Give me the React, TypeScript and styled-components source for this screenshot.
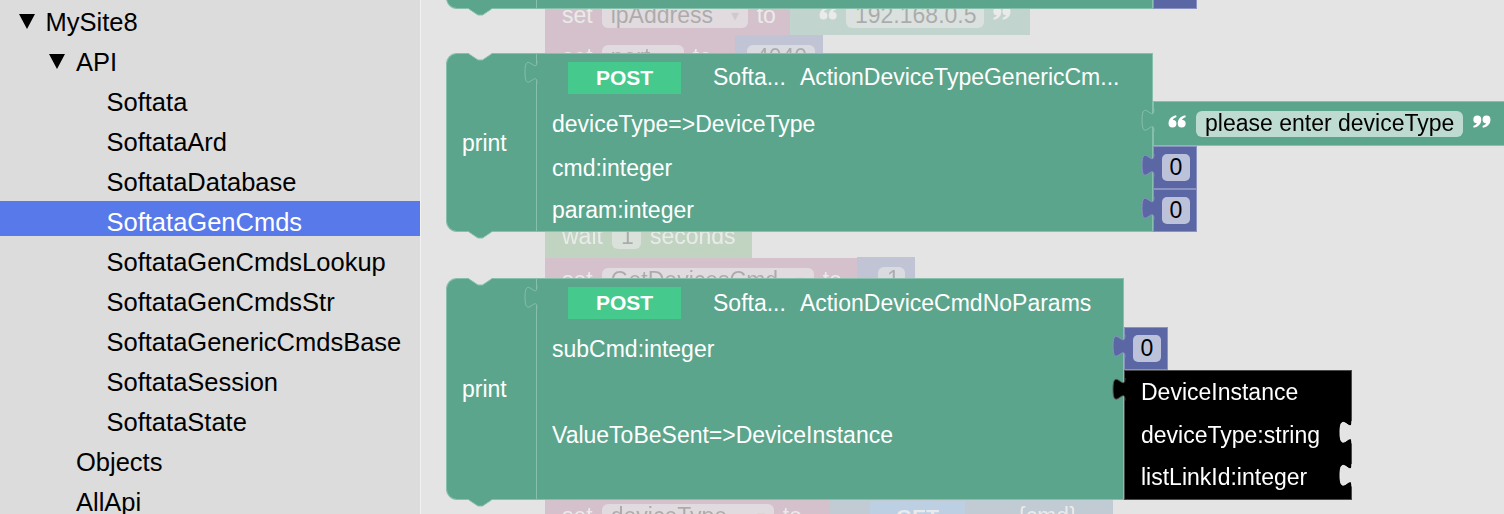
import React from "react";
import styled, { createGlobalStyle } from "styled-components";

const CANVAS = "#e4e4e4";
const TEXT_HUE = "#5ba58c";
const TEXT_EDGE = "#86bfab";
const MATH_HUE = "#5b67a5";
const MATH_EDGE = "#8a92c2";
const VAR_HUE = "#a55b80";
const LOOP_HUE = "#5ba55b";
const HTTP_HUE = "#5b80a5";
const WS_LEFT = 421;

// blockly shapes at 1.5x
const TAB = "c 0,15 -12,-12 -12,11.25 s 12,-3.75 12,11.25";
const NOTCH = "l 9,6 4.5,0 9,-6";
const QUOTE_MARK =
  "M 0.2,7 C 0.2,3.5 2.2,1 6.5,0 L 6.9,1.4 C 4.9,2.2 4,3 3.8,3.7 A 3.3,3.3 0 1 1 0.2,7 Z";

const tree = [
  { label: "MySite8", level: 0, open: true },
  { label: "API", level: 1, open: true },
  { label: "Softata", level: 2 },
  { label: "SoftataArd", level: 2 },
  { label: "SoftataDatabase", level: 2 },
  { label: "SoftataGenCmds", level: 2, selected: true },
  { label: "SoftataGenCmdsLookup", level: 2 },
  { label: "SoftataGenCmdsStr", level: 2 },
  { label: "SoftataGenericCmdsBase", level: 2 },
  { label: "SoftataSession", level: 2 },
  { label: "SoftataState", level: 2 },
  { label: "Objects", level: 1 },
  { label: "AllApi", level: 1 },
];

type InputRow = { label: string; height: number; value?: React.ReactNode };

const OutputTab = ({ top, fill, stroke }: { top: number; fill: string; stroke: string }) => (
  <TabSvg $top={top} $side="left" width="14" height="24" viewBox="-13 -1 14 24">
    <path d={`M 1,0 L 0,0 ${TAB} L 1,22.5 Z`} fill={fill} />
    <path d={`M 0,0 ${TAB}`} fill="none" stroke={stroke} />
  </TabSvg>
);

const EmptySocket = () => (
  <TabSvg $top={6.5} $side="right" width="14" height="24" viewBox="-13 -1 14 24">
    <path d={`M 1,0 L 0,0 ${TAB} L 1,22.5 Z`} fill={CANVAS} />
    <path d={`M 0,0 ${TAB}`} fill="none" stroke="#f4f4f4" />
  </TabSvg>
);

const TopNotch = () => (
  <NotchSvg $edge="top" width="23" height="8" viewBox="0 -1 23 8">
    <path d={`M 0,-1 L 0,0 ${NOTCH} L 22.5,-1 Z`} fill={CANVAS} />
    <path d={`M 0,0 ${NOTCH}`} fill="none" stroke={TEXT_EDGE} />
  </NotchSvg>
);

const NextTab = () => (
  <NotchSvg $edge="bottom" width="23" height="8" viewBox="0 -1 23 8">
    <path d={`M 0,-1 L 0,0 ${NOTCH} L 22.5,-1 Z`} fill={TEXT_HUE} />
    <path d={`M 0,0 ${NOTCH}`} fill="none" stroke={TEXT_EDGE} />
  </NotchSvg>
);

const Quote = ({ close }: { close?: boolean }) => (
  <QuoteSvg width="18" height="13" viewBox="0 0 18 13">
    <g fill="#fff" transform={close ? "rotate(180 9 6.5)" : undefined}>
      <path d={QUOTE_MARK} transform="translate(0.3 0.2) scale(1.2)" />
      <path d={QUOTE_MARK} transform="translate(9.5 0.2) scale(1.2)" />
    </g>
  </QuoteSvg>
);

const NumberValue = ({ value = "0" }: { value?: string }) => (
  <NumberBlock>
    <OutputTab top={5.5} fill={MATH_HUE} stroke={MATH_EDGE} />
    <NumField>{value}</NumField>
  </NumberBlock>
);

const StringValue = ({ text }: { text: string }) => (
  <StringBlock>
    <OutputTab top={5.5} fill={TEXT_HUE} stroke={TEXT_EDGE} />
    <Quote />
    <TextField>{text}</TextField>
    <Quote close />
  </StringBlock>
);

const ObjectValue = ({ title, fields }: { title: string; fields: string[] }) => (
  <ObjectBlock>
    <OutputTab top={5.5} fill="#000" stroke="#555" />
    <ObjectRow>{title}</ObjectRow>
    {fields.map((f) => (
      <ObjectRow key={f}>
        {f}
        <EmptySocket />
      </ObjectRow>
    ))}
  </ObjectBlock>
);

const PrintApiCall = ({
  x,
  y,
  body,
  header,
  service,
  action,
  rows,
}: {
  x: number;
  y: number;
  body: number;
  header: number;
  service: string;
  action: string;
  rows: InputRow[];
}) => {
  const template = [header, ...rows.map((r) => r.height)].map((h) => `${h}px`).join(" ");
  return (
    <Placed $x={x} $y={y}>
      <Assembly $body={body} $rows={template}>
        <PrintCol>
          <TopNotch />
          print
          <NextTab />
        </PrintCol>
        <CallCell $row={1} $first>
          <OutputTab top={5.5} fill={TEXT_HUE} stroke={TEXT_EDGE} />
          <Method>POST</Method>
          <Service>{service}</Service>
          <span>{action}</span>
        </CallCell>
        {rows.map((r, i) => (
          <React.Fragment key={i}>
            <CallCell $row={i + 2} $last={i === rows.length - 1}>
              {r.label}
            </CallCell>
            <Slot $row={i + 2}>{r.value}</Slot>
          </React.Fragment>
        ))}
      </Assembly>
    </Placed>
  );
};

const App: React.FC = () => {
  return (
    <>
      <GlobalStyle />
      <Page>
        <Sidebar>
          {tree.map((n) => (
            <TreeRow key={n.label} $level={n.level} $selected={n.selected}>
              <Caret $open={n.open} />
              <TreeLabel>{n.label}</TreeLabel>
            </TreeRow>
          ))}
        </Sidebar>

        <Workspace>
          <GhostLayer>
            <Ghost $x={545} $y={-5} $w={245} $h={40} $color={VAR_HUE}>
              set
              <GhostField $w={146}>
                ipAddress<Arrow>▾</Arrow>
              </GhostField>
              to
            </Ghost>
            <Ghost $x={790} $y={-5} $w={240} $h={40} $color={TEXT_HUE} $pad={29}>
              <Quote />
              <GhostField $w={138}>192.168.0.5</GhostField>
              <Quote close />
            </Ghost>
            <Ghost $x={545} $y={35} $w={192} $h={45} $color={VAR_HUE}>
              set
              <GhostField $w={82}>port</GhostField>
              to
            </Ghost>
            <Ghost $x={735} $y={35} $w={88} $h={45} $color={MATH_HUE} $pad={12}>
              <GhostField $w={68}>4040</GhostField>
            </Ghost>
            <Ghost $x={545} $y={215} $w={207} $h={43} $color={LOOP_HUE}>
              wait
              <GhostField $w={29}>1</GhostField>
              seconds
            </Ghost>
            <Ghost $x={545} $y={258} $w={312} $h={45} $color={VAR_HUE}>
              set
              <GhostField $w={212}>
                GetDevicesCmd...<Arrow>▾</Arrow>
              </GhostField>
              to
            </Ghost>
            <Ghost $x={857} $y={257} $w={58} $h={45} $color={MATH_HUE} $pad={21}>
              <GhostField $w={27}>1</GhostField>
            </Ghost>
            <Ghost $x={545} $y={494} $w={285} $h={45} $color={VAR_HUE}>
              set
              <GhostField $w={172}>
                deviceType...<Arrow>▾</Arrow>
              </GhostField>
              to
            </Ghost>
            <Ghost $x={830} $y={494} $w={283} $h={45} $color={HTTP_HUE} $pad={40}>
              <GhostBadge>GET</GhostBadge>
              {"{cmd}"}
            </Ghost>
          </GhostLayer>

          <PrintApiCall
            x={446}
            y={-99}
            body={617}
            header={48}
            service="Softa..."
            action="ActionDeviceTypeGenericCm..."
            rows={[{ label: "param:integer", height: 60, value: <NumberValue /> }]}
          />

          <PrintApiCall
            x={446}
            y={53}
            body={617}
            header={48}
            service="Softa..."
            action="ActionDeviceTypeGenericCm..."
            rows={[
              {
                label: "deviceType=>DeviceType",
                height: 45,
                value: <StringValue text="please enter deviceType" />,
              },
              { label: "cmd:integer", height: 43, value: <NumberValue /> },
              { label: "param:integer", height: 43, value: <NumberValue /> },
            ]}
          />

          <PrintApiCall
            x={446}
            y={278}
            body={588}
            header={49}
            service="Softa..."
            action="ActionDeviceCmdNoParams"
            rows={[
              { label: "subCmd:integer", height: 43, value: <NumberValue /> },
              {
                label: "ValueToBeSent=>DeviceInstance",
                height: 130,
                value: (
                  <ObjectValue
                    title="DeviceInstance"
                    fields={["deviceType:string", "listLinkId:integer"]}
                  />
                ),
              },
            ]}
          />
        </Workspace>
      </Page>
    </>
  );
};

export default App;

const GlobalStyle = createGlobalStyle`
  *, *::before, *::after { box-sizing: border-box; }
  html, body { margin: 0; padding: 0; }
  body {
    background: ${CANVAS};
    font-family: "Liberation Sans", Arial, sans-serif;
    overflow: hidden;
  }
`;

const Page = styled.div`
  display: flex;
  width: 1504px;
  height: 514px;
  overflow: hidden;
`;

const Sidebar = styled.div`
  flex-shrink: 0;
  width: 421px;
  padding-top: 1px;
  background: #dcdcdc;
  border-right: 1px solid #f2f2f2;
`;

const TreeRow = styled.div<{ $level: number; $selected?: boolean }>`
  display: flex;
  align-items: flex-start;
  height: 35px;
  margin-bottom: 5px;
  padding-left: ${(p) => 18.5 + p.$level * 30.5}px;
  background: ${(p) => (p.$selected ? "#5879ea" : "transparent")};
  color: ${(p) => (p.$selected ? "#fff" : "#000")};
`;

const Caret = styled.span<{ $open?: boolean }>`
  flex-shrink: 0;
  width: 0;
  height: 0;
  margin: 12.5px 11px 0 0;
  border-left: 8.5px solid transparent;
  border-right: 8.5px solid transparent;
  border-top: 15px solid ${(p) => (p.$open ? "#000" : "transparent")};
`;

const TreeLabel = styled.span`
  font-size: 25.5px;
  line-height: 43px;
  white-space: nowrap;
`;

const Workspace = styled.div`
  position: relative;
  flex: 1;
  background: ${CANVAS};
  overflow: hidden;
`;

const Placed = styled.div<{ $x: number; $y: number }>`
  position: absolute;
  left: ${(p) => p.$x - WS_LEFT}px;
  top: ${(p) => p.$y}px;
`;

const Assembly = styled.div<{ $body: number; $rows: string }>`
  display: grid;
  grid-template-columns: 90px ${(p) => p.$body}px max-content;
  grid-template-rows: ${(p) => p.$rows};
  color: #fff;
  font-size: 23px;
  white-space: nowrap;
`;

const PrintCol = styled.div`
  grid-column: 1;
  grid-row: 1 / -1;
  position: relative;
  display: flex;
  align-items: center;
  padding: 1px 0 0 15px;
  background: ${TEXT_HUE};
  border: 1px solid ${TEXT_EDGE};
  border-right: none;
  border-radius: 11px 0 0 11px;
`;

const CallCell = styled.div<{ $row: number; $first?: boolean; $last?: boolean }>`
  grid-column: 2;
  grid-row: ${(p) => p.$row};
  position: relative;
  display: flex;
  align-items: center;
  padding-left: ${(p) => (p.$first ? 31 : 15)}px;
  padding-top: ${(p) => (p.$first ? 0 : 1)}px;
  background: ${TEXT_HUE};
  border-left: 1px solid ${TEXT_EDGE};
  border-right: 1px solid ${TEXT_EDGE};
  border-top: ${(p) => (p.$first ? `1px solid ${TEXT_EDGE}` : "none")};
  border-bottom: ${(p) => (p.$last ? `1px solid ${TEXT_EDGE}` : "none")};
`;

const Slot = styled.div<{ $row: number }>`
  grid-column: 3;
  grid-row: ${(p) => p.$row};
  display: flex;
  align-items: stretch;
`;

const Method = styled.span`
  flex-shrink: 0;
  display: flex;
  align-items: center;
  justify-content: center;
  width: 113px;
  height: 32px;
  margin-right: 32px;
  background: #46c98d;
  font-size: 21px;
  font-weight: bold;
`;

const Service = styled.span`
  margin-right: 14px;
`;

const TabSvg = styled.svg<{ $top: number; $side: "left" | "right" }>`
  position: absolute;
  top: ${(p) => p.$top}px;
  ${(p) => (p.$side === "left" ? "left: -13.5px;" : "right: -1.5px;")}
  overflow: visible;
`;

const NotchSvg = styled.svg<{ $edge: "top" | "bottom" }>`
  position: absolute;
  left: 21.5px;
  top: ${(p) => (p.$edge === "top" ? "-1.5px" : "calc(100% - 0.5px)")};
  overflow: visible;
`;

const QuoteSvg = styled.svg`
  flex-shrink: 0;
  margin-bottom: 4px;
`;

const NumberBlock = styled.div`
  position: relative;
  display: flex;
  align-items: center;
  padding: 0 6px 0 8px;
  background: ${MATH_HUE};
  border: 1px solid ${MATH_EDGE};
`;

const NumField = styled.span`
  display: flex;
  align-items: center;
  justify-content: center;
  width: 28px;
  height: 27px;
  border-radius: 5px;
  background: rgba(255, 255, 255, 0.6);
  color: #000;
`;

const StringBlock = styled.div`
  position: relative;
  display: flex;
  align-items: center;
  gap: 10px;
  padding: 0 14px 0 14px;
  background: ${TEXT_HUE};
  border: 1px solid ${TEXT_EDGE};
`;

const TextField = styled.span`
  display: flex;
  align-items: center;
  height: 26px;
  padding: 0 9px;
  border-radius: 6px;
  background: rgba(255, 255, 255, 0.6);
  color: #000;
`;

const ObjectBlock = styled.div`
  position: relative;
  display: flex;
  flex-direction: column;
  width: 228px;
  background: #000;
  border: 1px solid #4a4a4a;
`;

const ObjectRow = styled.div`
  position: relative;
  flex: 1;
  display: flex;
  align-items: center;
  padding-left: 16px;
`;

const GhostLayer = styled.div`
  position: absolute;
  inset: 0;
  opacity: 0.25;
`;

const Ghost = styled.div<{ $x: number; $y: number; $w: number; $h: number; $color: string; $pad?: number }>`
  position: absolute;
  left: ${(p) => p.$x - WS_LEFT}px;
  top: ${(p) => p.$y}px;
  width: ${(p) => p.$w}px;
  height: ${(p) => p.$h}px;
  display: flex;
  align-items: center;
  gap: 9px;
  padding-left: ${(p) => p.$pad ?? 17}px;
  background: ${(p) => p.$color};
  color: #fff;
  font-size: 23px;
  white-space: nowrap;
  overflow: hidden;
`;

const GhostField = styled.span<{ $w: number }>`
  flex-shrink: 0;
  display: flex;
  align-items: center;
  justify-content: space-between;
  width: ${(p) => p.$w}px;
  height: 25px;
  padding: 0 9px;
  border-radius: 6px;
  background: rgba(255, 255, 255, 0.6);
  color: #000;
`;

const Arrow = styled.span`
  font-size: 16px;
  color: rgba(0, 0, 0, 0.35);
`;

const GhostBadge = styled.span`
  display: flex;
  align-items: center;
  justify-content: center;
  width: 95px;
  height: 32px;
  margin-right: 44px;
  background: #4a90e2;
  font-size: 21px;
  font-weight: bold;
`;
